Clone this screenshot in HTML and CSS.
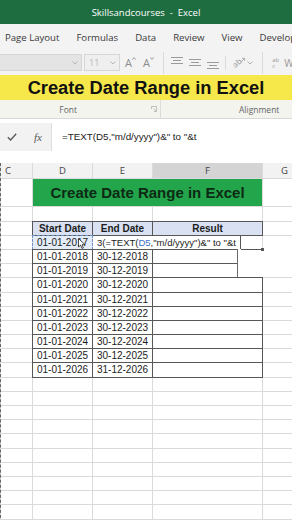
FILE: index.html
```html
<!DOCTYPE html>
<html lang="en">
<head>
    <meta charset="UTF-8">
    <meta name="viewport" content="width=device-width, initial-scale=1.0">
    <title>Skillsandcourses - Excel</title>
    <link rel="stylesheet" href="styles.css">
</head>
<body>

<!-- Window title -->
<div class="titlebar">Skillsandcourses&nbsp; - &nbsp;Excel</div>

<!-- Ribbon tabs -->
<nav class="tabs">
    <span>Page Layout</span>
    <span>Formulas</span>
    <span>Data</span>
    <span>Review</span>
    <span>View</span>
    <span>Developer</span>
</nav>

<!-- Ribbon tools (greyed out while editing) -->
<div class="tools">
    <div class="fontname">
        <svg class="chev" width="6" height="4" viewBox="0 0 6 4"><path d="M0.5 0.5 L3 3 L5.5 0.5" fill="none" stroke="#b5b5b5"/></svg>
    </div>
    <div class="fontsize">
        <span>11</span>
        <svg class="chev" width="6" height="4" viewBox="0 0 6 4"><path d="M0.5 0.5 L3 3 L5.5 0.5" fill="none" stroke="#b5b5b5"/></svg>
    </div>
    <span class="grow">A<svg width="4" height="3" viewBox="0 0 4 3"><path d="M0.3 2.7 L2 0.6 L3.7 2.7" fill="none" stroke="#8a8a8a" stroke-width="0.8"/></svg></span>
    <span class="grow">A<svg width="4" height="3" viewBox="0 0 4 3"><path d="M0.3 0.3 L2 2.4 L3.7 0.3" fill="none" stroke="#8a8a8a" stroke-width="0.8"/></svg></span>
    <span class="sep"></span>
    <svg class="align" width="12" height="14" viewBox="0 0 12 14"><path d="M0 1.5 H12 M2 4.5 H10 M0 7.5 H12" stroke="#9a9a9a"/></svg>
    <svg class="align" width="12" height="14" viewBox="0 0 12 14"><path d="M0 3.5 H12 M2 6.5 H10 M0 9.5 H12" stroke="#9a9a9a"/></svg>
    <svg class="align" width="12" height="14" viewBox="0 0 12 14"><path d="M0 6.5 H12 M2 9.5 H10 M0 12.5 H12" stroke="#9a9a9a"/></svg>
    <span class="sep thin"></span>
    <span class="orient">ab</span>
    <svg class="orient-arrow" width="5" height="6" viewBox="0 0 5 6"><path d="M0.5 5.5 L4.5 1.5 M2 1.3 H4.7 V4" fill="none" stroke="#9a9a9a" stroke-width="0.8"/></svg>
    <svg class="chev small" width="6" height="4" viewBox="0 0 6 4"><path d="M0.5 0.5 L3 3 L5.5 0.5" fill="none" stroke="#b0b0b0"/></svg>
    <span class="sep"></span>
    <span class="wrap-icon"><span>ab</span><span>c</span></span>
    <span class="wrap-label">Wrap Text</span>
</div>

<!-- Video caption over the ribbon -->
<div class="banner">Create Date Range in Excel</div>

<!-- Ribbon group names -->
<div class="groups">
    <div class="group group-font">
        <span>Font</span>
        <svg class="launcher" width="6" height="6" viewBox="0 0 6 6"><path d="M0.5 3 V0.5 H5.5 V5.5 H3 M2.5 2.5 L5 5" fill="none" stroke="#b0b0b0" stroke-width="0.8"/></svg>
    </div>
    <div class="group group-align">Alignment</div>
</div>

<!-- Formula bar -->
<div class="formula-bar">
    <div class="fx-box">
        <svg width="10" height="8" viewBox="0 0 10 8"><path d="M0.8 4.2 L3.6 7 L9.2 0.8" fill="none" stroke="#555" stroke-width="1.3"/></svg>
        <span class="fx">fx</span>
    </div>
    <div class="formula">=TEXT(D5,"m/d/yyyy")&amp;" to "&amp;t</div>
</div>

<!-- Worksheet -->
<div class="sheet">
    <div class="row head">
        <div class="col-c">C</div><div>D</div><div>E</div><div class="active">F</div><div class="col-g">G</div>
    </div>

    <div class="row tall">
        <div></div><div class="sheet-title">Create Date Range in Excel</div><div></div>
    </div>
    <div class="row"><div></div><div></div><div></div><div></div><div></div></div>

    <div class="row">
        <div></div><div class="t th">Start Date</div><div class="t th">End Date</div><div class="t th">Result</div><div></div>
    </div>
    <div class="row">
        <div></div>
        <div class="t ref">01-01-2017</div>
        <div class="edit-cell"><div class="editor">3(=TEXT(<span class="blue">D5</span>,"m/d/yyyy")&amp;" to "&amp;t</div></div>
        <div></div>
    </div>
    <div class="row"><div></div><div class="t">01-01-2018</div><div class="t">30-12-2018</div><div class="t"></div><div></div></div>
    <div class="row"><div></div><div class="t">01-01-2019</div><div class="t">30-12-2019</div><div class="t"></div><div></div></div>
    <div class="row"><div></div><div class="t">01-01-2020</div><div class="t">30-12-2020</div><div class="t"></div><div></div></div>
    <div class="row"><div></div><div class="t">01-01-2021</div><div class="t">30-12-2021</div><div class="t"></div><div></div></div>
    <div class="row"><div></div><div class="t">01-01-2022</div><div class="t">30-12-2022</div><div class="t"></div><div></div></div>
    <div class="row"><div></div><div class="t">01-01-2023</div><div class="t">30-12-2023</div><div class="t"></div><div></div></div>
    <div class="row"><div></div><div class="t">01-01-2024</div><div class="t">30-12-2024</div><div class="t"></div><div></div></div>
    <div class="row"><div></div><div class="t">01-01-2025</div><div class="t">30-12-2025</div><div class="t"></div><div></div></div>
    <div class="row"><div></div><div class="t">01-01-2026</div><div class="t">31-12-2026</div><div class="t"></div><div></div></div>

    <div class="row"><div></div><div></div><div></div><div></div><div></div></div>
    <div class="row"><div></div><div></div><div></div><div></div><div></div></div>
    <div class="row"><div></div><div></div><div></div><div></div><div></div></div>
    <div class="row"><div></div><div></div><div></div><div></div><div></div></div>
    <div class="row"><div></div><div></div><div></div><div></div><div></div></div>
    <div class="row"><div></div><div></div><div></div><div></div><div></div></div>
    <div class="row"><div></div><div></div><div></div><div></div><div></div></div>
    <div class="row"><div></div><div></div><div></div><div></div><div></div></div>
    <div class="row"><div></div><div></div><div></div><div></div><div></div></div>
    <div class="row"><div></div><div></div><div></div><div></div><div></div></div>
    <div class="row"><div></div><div></div><div></div><div></div><div></div></div>

    <!-- blank autocomplete popup under the editor -->
    <div class="popup"></div>

    <!-- mouse pointer over D5 -->
    <svg class="pointer" width="8" height="11" viewBox="0 0 8 11"><path d="M0.5 0.5 V9 L2.6 7.2 L4 10.4 L5.4 9.8 L4 6.7 H7 Z" fill="#fff" stroke="#222" stroke-width="0.8"/></svg>
</div>

</body>
</html>
```

FILE: styles.css
```css
body {
    margin: 0;
    width: 292px;
    height: 520px;
    overflow: hidden;
    background-color: #ffffff;
    font-family: 'Open Sans', sans-serif;
}

/* Title bar */
.titlebar {
    height: 24px;
    background-color: #1e6d41;
    color: #ffffff;
    font-size: 9.5px;
    display: flex;
    align-items: center;
    justify-content: center;
}

/* Tabs */
.tabs {
    height: 26px;
    background-color: #f3f3f3;
    display: flex;
    align-items: center;
    gap: 17px;
    padding-left: 5px;
    font-size: 9.6px;
    color: #3a3a3a;
    white-space: nowrap;
    overflow: hidden;
}

.tabs span {
    flex-shrink: 0;
}

/* Tools row */
.tools {
    height: 25px;
    background-color: #f3f3f3;
    display: flex;
    align-items: center;
    white-space: nowrap;
    overflow: hidden;
    color: #8a8a8a;
}

.tools > * {
    flex-shrink: 0;
}

.fontname, .fontsize {
    height: 17px;
    box-sizing: border-box;
    display: flex;
    align-items: center;
    justify-content: flex-end;
    padding-right: 3px;
    border: 1px solid #d6d6d6;
}

.fontname {
    width: 82px;
    background-color: #e4e4e4;
    border-left: none;
}

.fontsize {
    width: 36px;
    margin-left: 2px;
    background-color: #efefef;
    justify-content: space-between;
    padding-left: 4px;
    font-size: 9px;
    color: #b8b8b8;
}

.grow {
    display: flex;
    align-items: flex-start;
    font-size: 11px;
    margin-left: 5px;
    color: #8c8c8c;
}

.grow + .grow {
    margin-left: 7px;
}

.grow svg {
    margin-top: 2px;
}

.sep {
    width: 1px;
    height: 22px;
    background-color: #dadada;
    margin: 0 7px 0 9px;
}

.sep.thin {
    height: 14px;
    margin: 0 6px 0 0;
}

.align {
    margin-right: 6px;
}

.orient {
    display: inline-block;
    font-size: 8px;
    transform: rotate(-40deg);
    color: #9a9a9a;
}

.orient-arrow {
    margin: -5px 0 0 -1px;
}

.chev.small {
    margin-left: 2px;
}

.wrap-icon {
    display: flex;
    flex-direction: column;
    font-size: 6px;
    line-height: 6px;
    color: #9a9a9a;
    margin-left: 2px;
}

.wrap-label {
    font-size: 10px;
    margin-left: 5px;
    color: #9a9a9a;
}

/* Caption banner */
.banner {
    height: 25px;
    line-height: 25px;
    background-color: #f6e84b;
    text-align: center;
    font-family: 'Liberation Sans', Arial, sans-serif;
    font-weight: bold;
    font-size: 18.3px;
    color: #111111;
}

/* Group labels */
.groups {
    height: 18px;
    display: flex;
    background-color: #f4f4ef;
    border-bottom: 1px solid #d8d8d8;
    font-size: 8.5px;
    color: #666666;
}

.group {
    display: flex;
    align-items: center;
}

.group-font {
    width: 161px;
    border-right: 1px solid #dcdcdc;
    justify-content: flex-end;
    box-sizing: border-box;
    padding-right: 3px;
}

.group-font span {
    margin-right: 74px;
}

.group-align {
    padding-left: 78px;
}

/* Formula bar */
.formula-bar {
    height: 44px;
    display: flex;
    align-items: flex-start;
    padding-top: 4px;
    box-sizing: border-box;
    background-color: #ffffff;
}

.fx-box {
    width: 52px;
    height: 28px;
    box-sizing: border-box;
    background-color: #f2f2f2;
    border-right: 1px solid #dedede;
    display: flex;
    align-items: center;
    padding-left: 7px;
    gap: 17px;
}

.fx {
    font-family: 'Liberation Serif', serif;
    font-style: italic;
    font-size: 11px;
    color: #555555;
}

.formula {
    height: 28px;
    line-height: 28px;
    padding-left: 10px;
    font-family: 'Liberation Sans', Arial, sans-serif;
    font-size: 9.8px;
    color: #222222;
    white-space: nowrap;
}

/* Worksheet grid */
.sheet {
    position: relative;
    display: flex;
    flex-direction: column;
    gap: 1px;
    background-color: #dadada;
    border-left: 1px dashed #666666;
    font-family: 'Liberation Sans', Arial, sans-serif;
    font-size: 10px;
    color: #1c1c1c;
}

.row {
    display: grid;
    grid-template-columns: 31px 59px 59px 109px 1fr;
    gap: 1px;
    height: 13.2px;
}

.row > div {
    background-color: #ffffff;
    text-align: center;
    line-height: 13.2px;
    white-space: nowrap;
}

.row.head {
    height: 15px;
}

.row.head > div {
    background-color: #f2f2f2;
    line-height: 15px;
    color: #444444;
    font-family: 'Open Sans', sans-serif;
    font-size: 9.5px;
}

.row.head > .active {
    background-color: #d4d4d4;
}

.row.head > .col-c {
    text-align: left;
    padding-left: 4px;
}

.row.head > .col-g {
    text-align: left;
    padding-left: 18px;
}

.row.tall {
    height: 27.4px;
}

.row > .sheet-title {
    grid-column: 2 / 5;
    background-color: #22a54b;
    line-height: 27.4px;
    font-weight: bold;
    font-size: 15px;
    color: #0e2914;
}

/* Table */
.row > .t {
    outline: 1px solid #575757;
}

.row > .th {
    background-color: #d9e1f2;
    font-weight: bold;
}

.row > .ref {
    background-color: #e3ecf8;
    outline: 1px dashed #6f8fc2;
}

.row > .edit-cell {
    grid-column: 3 / 5;
    text-align: left;
}

.editor {
    width: 148px;
    height: 100%;
    box-sizing: border-box;
    border-right: 1px solid #555555;
    padding-left: 4px;
    font-size: 9.5px;
}

.blue {
    color: #3b6fc6;
}

/* Overlays */
.popup {
    position: absolute;
    left: 236px;
    top: 86px;
    width: 60px;
    height: 28px;
    background-color: #ffffff;
    border-left: 1px solid #6a6a6a;
    z-index: 1;
}

.popup::before {
    content: '';
    position: absolute;
    left: 3px;
    top: 0;
    width: 21px;
    height: 1px;
    background-color: #555555;
}

.popup::after {
    content: '';
    position: absolute;
    left: 23px;
    top: -1px;
    width: 3px;
    height: 3px;
    background-color: #555555;
}

.pointer {
    position: absolute;
    left: 77px;
    top: 75px;
    z-index: 2;
}
```
